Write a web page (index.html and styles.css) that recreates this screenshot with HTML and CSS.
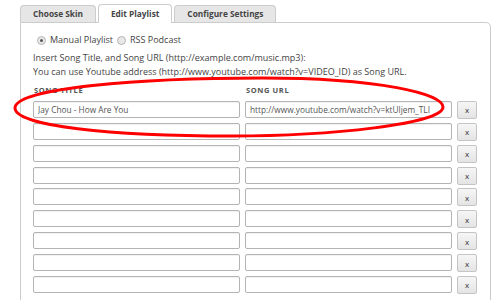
FILE: index.html
```html
<!DOCTYPE html>
<html lang="en">
<head>
    <meta charset="UTF-8">
    <title>Edit Playlist</title>
    <link rel="stylesheet" href="styles.css">
</head>
<body>
    <div class="tabs">
        <div class="tab">Choose Skin</div>
        <div class="tab tab-active">Edit Playlist</div>
        <div class="tab">Configure Settings</div>
    </div>

    <div class="panel">
        <div class="source-row">
            <label class="radio-label"><span class="radio radio-checked"></span>Manual Playlist</label>
            <label class="radio-label"><span class="radio"></span>RSS Podcast</label>
        </div>

        <p class="help">
            Insert Song Title, and Song URL (http://example.com/music.mp3):<br>
            You can use Youtube address (http://www.youtube.com/watch?v=VIDEO_ID) as Song URL.
        </p>

        <div class="song-grid">
            <div class="col-label">Song Title</div>
            <div class="col-label">Song URL</div>
            <div></div>

            <input class="field" type="text" value="Jay Chou - How Are You">
            <input class="field" type="text" value="http://www.youtube.com/watch?v=ktUljem_TLI">
            <button class="remove">x</button>

            <input class="field" type="text"><input class="field" type="text"><button class="remove">x</button>
            <input class="field" type="text"><input class="field" type="text"><button class="remove">x</button>
            <input class="field" type="text"><input class="field" type="text"><button class="remove">x</button>
            <input class="field" type="text"><input class="field" type="text"><button class="remove">x</button>
            <input class="field" type="text"><input class="field" type="text"><button class="remove">x</button>
            <input class="field" type="text"><input class="field" type="text"><button class="remove">x</button>
            <input class="field" type="text"><input class="field" type="text"><button class="remove">x</button>
            <input class="field" type="text"><input class="field" type="text"><button class="remove">x</button>
        </div>
    </div>

    <!-- annotation drawn over the first row -->
    <svg class="marker" width="500" height="300" viewBox="0 0 500 300">
        <path d="M15 108 C 15 88 140 78 262 78 C 380 78 443 94 443 107 C 443 124 330 136 232 136 C 110 136 15 126 15 108 Z"
              fill="none" stroke="#f00" stroke-width="3"/>
    </svg>
</body>
</html>
```

FILE: styles.css
```css
body {
    margin: 0;
    font-family: 'Open Sans', 'Liberation Sans', sans-serif;
    font-size: 9px;
    color: #444;
    background: #fff;
    position: relative;
    overflow: hidden;
}

.tabs {
    display: flex;
    align-items: flex-end;
    gap: 2px;
    padding: 4px 0 0 20px;
    position: relative;
    z-index: 1;
}

.tab {
    height: 16px;
    line-height: 16px;
    padding: 0 12px;
    border: 1px solid #ccc;
    border-bottom: none;
    border-radius: 4px 4px 0 0;
    background: #e6e6e6;
    font-size: 8.3px;
    font-weight: 700;
    color: #444;
}

.tab-active {
    height: 18px;
    line-height: 18px;
    background: #fff;
    margin-bottom: -1px;
}

.panel {
    margin-left: 20px;
    width: 444px;
    border: 1px solid #ccc;
    border-radius: 0 5px 0 0;
    padding: 10px 13px 10px 12px;
    height: 300px;
}

.source-row {
    display: flex;
    gap: 4px;
    padding-left: 4px;
    line-height: 14px;
}

.radio-label {
    display: flex;
    align-items: center;
    gap: 4px;
}

.radio {
    width: 7px;
    height: 7px;
    border: 1px solid #b5b5b5;
    border-radius: 50%;
    background: #e8e8e8;
    position: relative;
}

.radio-checked::after {
    content: '';
    position: absolute;
    left: 2px;
    top: 2px;
    width: 3px;
    height: 3px;
    border-radius: 50%;
    background: #555;
}

.help {
    margin: 4px 0 0;
    line-height: 14px;
}

.song-grid {
    display: grid;
    grid-template-columns: 207px 207px 20px;
    column-gap: 5px;
    row-gap: 4.875px;
    margin-top: 5px;
}

.col-label {
    font-size: 7.5px;
    font-weight: 700;
    text-transform: uppercase;
    letter-spacing: 0.6px;
    color: #555;
    padding-left: 1px;
    line-height: 12px;
}

.field {
    box-sizing: border-box;
    height: 17px;
    margin: 0;
    padding: 0 4px;
    border: 1px solid #b4b4b4;
    border-radius: 2px;
    box-shadow: inset 0 1px 1px rgba(0, 0, 0, 0.06);
    font-family: inherit;
    font-size: 8.3px;
    color: #555;
    background: #fff;
}

.remove {
    box-sizing: border-box;
    height: 18px;
    margin: 0 0 -1px;
    padding: 0;
    border: 1px solid #c4c4c4;
    border-radius: 2px;
    background: linear-gradient(#f6f6f6, #e4e4e4);
    font-family: inherit;
    font-size: 8px;
    color: #333;
}

.marker {
    position: absolute;
    left: 0;
    top: 0;
    pointer-events: none;
    z-index: 2;
}
```
